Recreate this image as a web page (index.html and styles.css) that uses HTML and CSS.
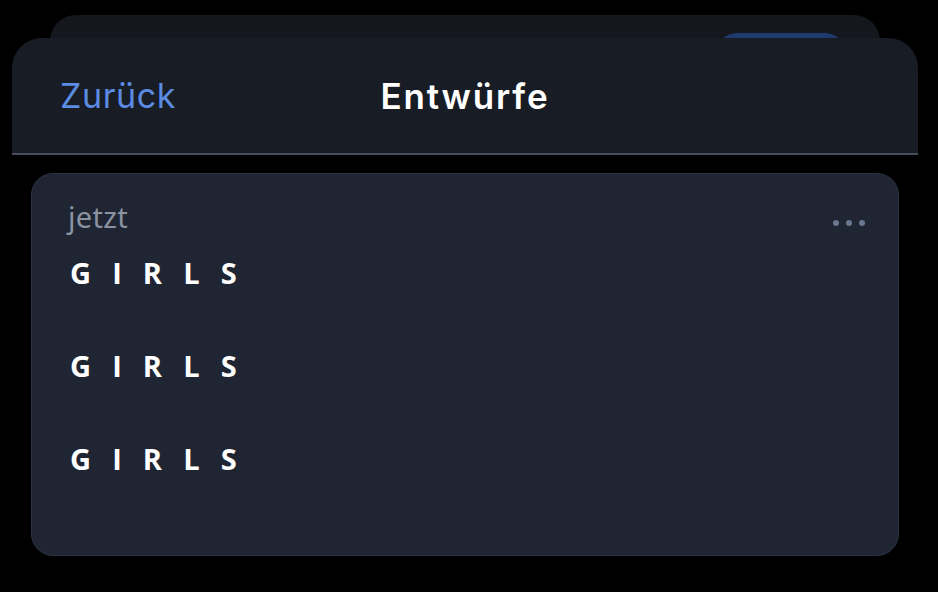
FILE: index.html
```html
<!DOCTYPE html>
<html lang="de">
<head>
<meta charset="utf-8">
<link rel="stylesheet" href="styles.css">
</head>
<body>
<div class="stack">
  <div class="back-sheet"><div class="back-pill"></div></div>
  <header class="sheet-header">
    <span class="back">Zurück</span>
    <h1 class="title">Entwürfe</h1>
    <span class="spacer"></span>
  </header>
  <section class="card">
    <div class="card-top">
      <span class="time">jetzt</span>
      <span class="more"><i></i><i></i><i></i></span>
    </div>
    <p class="line">G I R L S</p>
    <p class="line">G I R L S</p>
    <p class="line">G I R L S</p>
  </section>
</div>
</body>
</html>
```
FILE: styles.css
```css
html, body {
  margin: 0;
  padding: 0;
  background: #000;
  height: 100%;
  overflow: hidden;
}
body {
  font-family: Inter, "Noto Sans", "Liberation Sans", sans-serif;
}
.stack {
  position: relative;
  padding-top: 38px;
}
.back-sheet {
  position: absolute;
  top: 15px;
  left: 50px;
  right: 58px;
  height: 80px;
  background: #14171d;
  border-radius: 26px 26px 0 0;
}
.back-pill {
  position: absolute;
  top: 18px;
  left: 667px;
  width: 128px;
  height: 40px;
  border-radius: 20px;
  background: #1f3a6c;
}
.sheet-header {
  position: relative;
  margin: 0 20px 0 12px;
  height: 115px;
  background: #181c24;
  border-radius: 30px 30px 0 0;
  border-bottom: 2px solid #474d5c;
  display: grid;
  grid-template-columns: 1fr auto 1fr;
  align-items: center;
  padding: 0 48px;
}
.back {
  color: #5b8be2;
  font-size: 34px;
  font-weight: 400;
  letter-spacing: 0.6px;
}
.title {
  margin: 0;
  color: #fff;
  font-size: 35px;
  font-weight: 600;
  letter-spacing: 1.8px;
}
.card {
  margin: 18px 39px 0 31px;
  height: 383px;
  box-sizing: border-box;
  background: #1f2533;
  border: 1px solid #2a3242;
  border-radius: 22px;
  padding: 26px 33px 0 36px;
}
.card-top {
  display: flex;
  justify-content: space-between;
  align-items: center;
  height: 32px;
}
.time {
  color: #8b93a2;
  font-size: 29px;
  letter-spacing: 0.3px;
  font-family: "Noto Sans", "Open Sans", sans-serif;
}
.more {
  display: flex;
  gap: 7px;
  margin-top: 14px;
}
.more i {
  width: 6px;
  height: 6px;
  border-radius: 50%;
  background: #6a7790;
}
.line {
  margin: 0 0 0 2px;
  color: #fff;
  font-family: "Open Sans", "Noto Sans", sans-serif;
  font-weight: 700;
  font-size: 29px;
  letter-spacing: 6.8px;
  line-height: 40px;
}
.card-top + .line {
  margin-top: 21px;
}
.line + .line {
  margin-top: 53px;
}
```
